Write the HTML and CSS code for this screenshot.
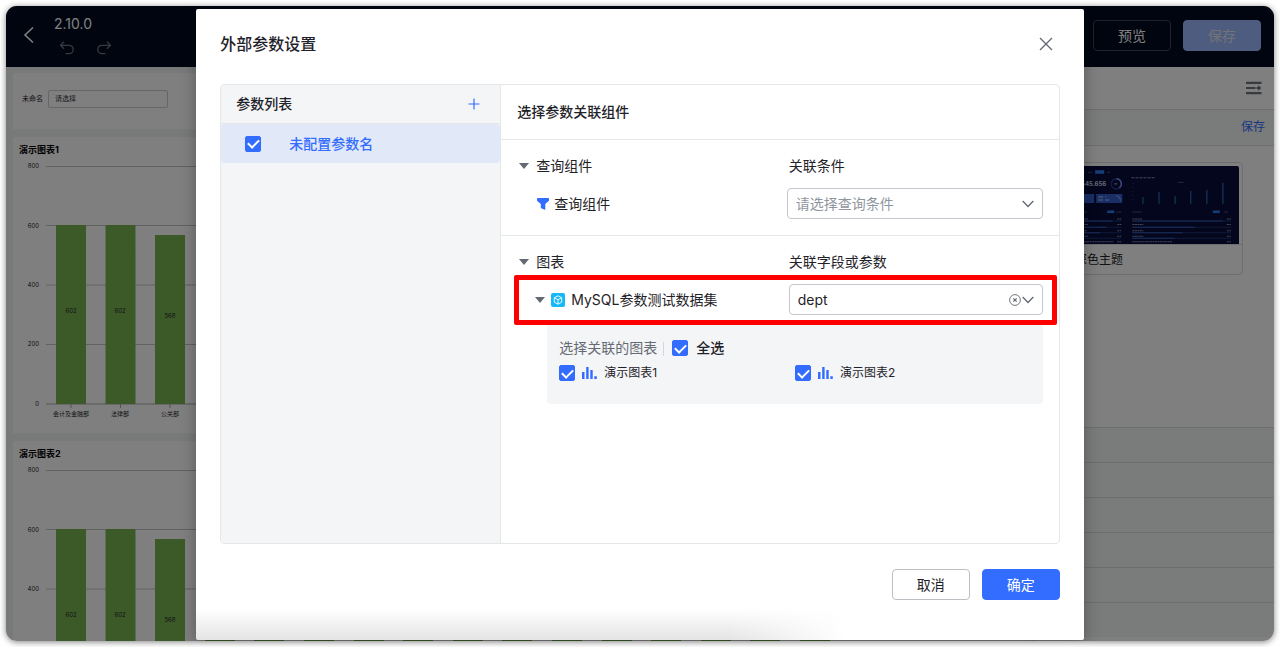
FILE: index.html
```html
<!DOCTYPE html>
<html lang="zh-CN">
<head>
<meta charset="utf-8">
<title>外部参数设置</title>
<link rel="stylesheet" href="styles.css">
</head>
<body>
<div class="window">
  <header class="topbar">
    <button class="icon-btn back" aria-label="返回"><svg width="12" height="18" viewBox="0 0 12 18" fill="none" stroke="currentColor" stroke-width="1.6"><path d="M10 1.500 2 9l8 7.500"/></svg></button>
    <div class="doc">
      <div class="doc-name">2.10.0</div>
      <div class="history">
        <button class="icon-btn" aria-label="撤销"><svg width="16" height="14" viewBox="0 0 16 14" fill="none" stroke="currentColor" stroke-width="1.300"><path d="M5 .8 1.500 4.300 5 7.800M1.500 4.300H10a4.200 4.200 0 0 1 0 8.400H6.500"/></svg></button>
        <button class="icon-btn" aria-label="重做"><svg width="16" height="14" viewBox="0 0 16 14" fill="none" stroke="currentColor" stroke-width="1.300"><path d="m11 .8 3.500 3.500L11 7.800M14.500 4.300H6a4.200 4.200 0 0 0 0 8.400h3.500"/></svg></button>
      </div>
    </div>
    <div class="top-actions">
      <button class="btn preview">预览</button>
      <button class="btn save">保存</button>
    </div>
  </header>

  <div class="workspace">
    <main class="canvas">
      <section class="card filter">
        <label for="unnamed">未命名</label>
        <input id="unnamed" type="text" placeholder="请选择">
      </section>
      <section class="card chart">
        <h2>演示图表1</h2>
        <svg class="plot" width="830" height="269" viewBox="0 0 830 269">
          <path class="grid" d="M27 8.500H830M27 67.500H830M27 127H830M27 186.500H830"/>
          <path class="axis" d="M27 246H830M52 246v4M101.500 246v4M151 246v4"/>
          <path class="bars" d="M37 67h30v179h-30zM86.500 67h30v179h-30zM136 77h30v169h-30zM186 85h30v161h-30zM235 90h30v156h-30zM285 95h30v151h-30z"/>
          <g class="ticks"><text x="20" y="10">800</text><text x="20" y="70">600</text><text x="20" y="129">400</text><text x="20" y="188">200</text><text x="20" y="248">0</text></g>
          <g class="values"><text x="52" y="155">602</text><text x="101" y="155">602</text><text x="151" y="160">568</text><text x="52" y="258">会计及金融部</text><text x="101" y="258">法律部</text><text x="151" y="258">公关部</text></g>
        </svg>
      </section>
      <section class="card chart">
        <h2>演示图表2</h2>
        <svg class="plot" width="830" height="269" viewBox="0 0 830 269">
          <path class="grid" d="M27 8.500H830M27 67.500H830M27 127H830M27 186.500H830"/>
          <path class="axis" d="M27 246H830"/>
          <path class="bars" d="M37 67h30v179h-30zM86.500 67h30v179h-30zM136 77h30v169h-30zM186 85h30v161h-30zM235 90h30v156h-30zM285 95h30v151h-30zM335 100h30v146h-30zM384 105h30v141h-30zM434 110h30v136h-30zM483 115h30v131h-30zM533 120h30v126h-30zM583 125h30v121h-30zM632 130h30v116h-30zM682 135h30v111h-30zM731 140h30v106h-30zM781 145h30v101h-30z"/>
          <g class="ticks"><text x="20" y="10">800</text><text x="20" y="70">600</text><text x="20" y="129">400</text></g>
          <g class="values"><text x="52" y="155">602</text><text x="101" y="155">602</text><text x="151" y="160">568</text></g>
        </svg>
      </section>
    </main>

    <aside class="side">
      <div class="side-head"><button class="icon-btn collapse" aria-label="收起"><svg width="16" height="14" viewBox="0 0 16 14" fill="currentColor"><path d="M0 .8h15.500V3H0zM0 6h9.500v2H0zM0 11h15.500v2.200H0zM10.500 6H12V4.200L15.500 7 12 9.800V8h-1.500z"/></svg></button></div>
      <div class="side-bar"><a href="#">保存</a></div>
      <div class="themes">
        <div class="theme">
          <svg class="thumb" viewBox="0 0 168 78" preserveAspectRatio="xMaxYMid slice">
            <path fill="#060c38" d="M0 0h168v78H0z"/>
            <path fill="#2d7df0" d="M25 4.500h9v3.500h-9zM37 44.500h7v2.500h-7zM142 44.500h7v2.500h-7z"/>
            <path fill="#315cc8" d="M0 28h24v9H0zM26 28h26v9H26z"/>
            <path fill="none" stroke="#b8c8ff" stroke-dasharray="5 2" d="M2 31h14M28 31h8M2 34h12M28 34h11"/>
            <circle cx="46" cy="18" r="5" fill="none" stroke="#26368c" stroke-width="1.500"/>
            <path fill="none" stroke="#7590ee" stroke-width="1.500" d="M46 13a5 5 0 0 1 3 9M46 30a4 4 0 0 1 4 5"/>
            <path stroke="#8890b8" stroke-dasharray="3 1" d="M61 12h23M44 18h4"/>
            <path stroke="#59608c" stroke-width=".8" d="M12 6.500h3M18 6.500h4M37 6.500h3M46 46h5M153 46h4M107 16.500h6M12 46h5M62 46h9"/>
            <path stroke="#30386c" stroke-dasharray="1 3" d="M62.500 17v20"/>
            <path stroke="#24599f" stroke-width="1.500" d="M72.500 31v7M88.500 26v12M104.500 30v8M120 25v13M136 24v14M152 17v21"/>
            <path stroke="#20366f" d="M62 55h98M62 61h98M62 66.500h98M62 72h98M0 55h51M0 61h51M0 66.500h51M0 72h51"/>
            <path stroke="#3058b4" d="M62 55h90M62 61h62M62 66.500h50M62 72h42M0 55h42M0 61h36M0 66.500h30"/>
            <path stroke="#858cb5" stroke-dasharray="2 .5" d="M62 53h10M62 58.500h11M62 64.500h11M62 70h11M62 75.500h40M12 53h6M12 58.500h6M12 64.500h5M12 70h6M12 75.500h31M156 53h4M156 58.500h4M156 64.500h4M156 70h4M156 75.500h4M47 53h4M47 58.500h4M47 64.500h4M47 70h4M47 75.500h4"/>
            <text x="36" y="20" text-anchor="end">1.545.656</text>
          </svg>
          <div class="theme-name">深色主题</div>
        </div>
      </div>
      <div class="groups"><div></div><div></div><div></div><div></div><div></div><div></div></div>
    </aside>
  </div>

  <div class="mask">
    <div class="modal" role="dialog" aria-labelledby="dlg-title">
      <div class="modal-head">
        <h1 id="dlg-title">外部参数设置</h1>
        <button class="icon-btn close" aria-label="关闭"><svg width="14" height="14" viewBox="0 0 14 14" fill="none" stroke="currentColor" stroke-width="1.400"><path d="m1 1 12 12M13 1 1 13"/></svg></button>
      </div>
      <div class="modal-body">
        <div class="params">
          <div class="params-head">
            <h3>参数列表</h3>
            <button class="icon-btn add" aria-label="添加"><svg width="12" height="12" viewBox="0 0 12 12" fill="none" stroke="currentColor" stroke-width="1.200"><path d="M6 .5v11M.5 6h11"/></svg></button>
          </div>
          <div class="param">
            <input type="checkbox" id="p1" checked>
            <label for="p1">未配置参数名</label>
          </div>
        </div>
        <div class="relations">
          <h3 class="rel-title">选择参数关联组件</h3>
          <section class="rel">
            <div class="rel-row">
              <div class="cell"><i class="caret"></i><span>查询组件</span></div>
              <div class="col-label">关联条件</div>
            </div>
            <div class="rel-row fields">
              <div class="cell query">
                <svg width="12" height="12" viewBox="0 0 12 12" fill="#336dff"><path d="M.6 0h10.800q.6 0 .6.600v1.700q0 .4-.3.700L8.300 6v5.400q0 .6-.6.400L4.200 10.300q-.4-.2-.4-.6V6L.3 3Q0 2.700 0 2.300V.6Q0 0 .6 0z"/></svg>
                <label for="cond">查询组件</label>
              </div>
              <div class="select">
                <select id="cond" class="empty"><option>请选择查询条件</option></select>
                <svg class="chev" width="12" height="8" viewBox="0 0 12 8"><path d="m.7 1 5.300 5.500L11.300 1"/></svg>
              </div>
            </div>
          </section>
          <section class="rel">
            <div class="rel-row">
              <div class="cell"><i class="caret"></i><span>图表</span></div>
              <div class="col-label">关联字段或参数</div>
            </div>
            <div class="rel-row fields marked">
              <div class="cell dataset">
                <i class="caret"></i>
                <svg width="14" height="14" viewBox="0 0 14 14"><rect width="14" height="14" rx="2" fill="#14b8f8"/><path d="M7 2.800 10.700 4.700v4.500L7 11.200 3.300 9.200V4.700zM3.300 4.700 7 6.700l3.700-2M7 6.700v4.500" fill="none" stroke="#fff" stroke-width=".9"/></svg>
                <label for="field">MySQL参数测试数据集</label>
              </div>
              <div class="select narrow">
                <select id="field"><option>dept</option></select>
                <button class="icon-btn clear" aria-label="清除"><svg width="12" height="12" viewBox="0 0 12 12" fill="none" stroke="currentColor"><circle cx="6" cy="6" r="5.400" stroke-width=".9"/><path d="m4.300 4.300 3.400 3.400M7.700 4.300 4.300 7.700" stroke-width="1.200"/></svg></button>
                <svg class="chev" width="12" height="8" viewBox="0 0 12 8"><path d="m.7 1 5.300 5.500L11.300 1"/></svg>
              </div>
            </div>
            <div class="picker">
              <div class="pick-head">
                <span class="hint">选择关联的图表</span>
                <input type="checkbox" id="all" checked>
                <label for="all">全选</label>
              </div>
              <div class="pick-list">
                <div class="pick"><input type="checkbox" id="c1" checked><svg width="15" height="12" viewBox="0 0 15 12" fill="#336dff"><path d="M0 5h2.500v7H0zM4.200 0h2.400v12H4.200zM8.300 3h2.400v9H8.300zM12.300 9.300h2.500V12h-2.500z"/></svg><label for="c1">演示图表1</label></div>
                <div class="pick"><input type="checkbox" id="c2" checked><svg width="15" height="12" viewBox="0 0 15 12" fill="#336dff"><path d="M0 5h2.500v7H0zM4.200 0h2.400v12H4.200zM8.300 3h2.400v9H8.300zM12.300 9.300h2.500V12h-2.500z"/></svg><label for="c2">演示图表2</label></div>
              </div>
            </div>
          </section>
        </div>
      </div>
      <div class="modal-foot">
        <button class="btn cancel">取消</button>
        <button class="btn ok">确定</button>
      </div>
    </div>
  </div>
</div>
</body>
</html>
```

FILE: styles.css
```css
* { box-sizing: border-box; }
body {
  margin: 0;
  padding: 6px;
  background: #fff;
  color: #1f2329;
  font: 14px/22px Inter, "Noto Sans CJK SC", sans-serif;
}
h1, h2, h3 { margin: 0; font-weight: 500; }
svg { display: block; flex: none; }
button, input, select { font: inherit; color: inherit; margin: 0; }
.icon-btn { display: flex; padding: 0; border: 0; background: none; cursor: pointer; }

.window {
  position: relative;
  display: flex;
  flex-direction: column;
  height: calc(100vh - 12px);
  border-radius: 11px;
  overflow: hidden;
  background: #f1f5f4;
  box-shadow: 0 1px 6px rgba(0, 0, 0, .5);
}

/* top bar */
.topbar {
  display: flex;
  align-items: flex-start;
  flex: none;
  height: 61px;
  padding: 0 13px 0 17px;
  background: #020a1e;
  color: #fff;
}
.back { margin-top: 20px; }
.doc { margin-left: 19px; padding-top: 7px; }
.doc-name { line-height: 22px; }
.history { display: flex; gap: 21px; margin: 6px 0 0 5px; color: #70747e; }
.top-actions { display: flex; gap: 12px; margin: 14px 0 0 auto; }
.btn {
  width: 78px;
  height: 31px;
  padding: 0;
  border: 1px solid #bbbfc4;
  border-radius: 4px;
  background: #fff;
  cursor: pointer;
}
.preview { background: transparent; border-color: #3f4450; }
.save { background: #9cb9ff; border-color: #9cb9ff; color: #e4e6ee; }

/* workspace */
.workspace { display: flex; flex: 1; min-height: 0; }
.canvas {
  display: flex;
  flex-direction: column;
  gap: 8px;
  flex: 1;
  min-width: 0;
  padding: 6px 7px;
  overflow: hidden;
}
.card { flex: none; background: #fff; overflow: hidden; }
.filter { display: flex; align-items: center; gap: 5px; height: 56px; padding: 0 9px 4px; font-size: 7px; }
.filter input {
  width: 120px;
  height: 18px;
  padding: 0 6px;
  border: 1px solid #ccc;
  border-radius: 2px;
  background: #fff;
}
.filter input::placeholder { color: #333; }
.chart { padding: 7px 6px 6px; }
.chart h2 { margin-bottom: 2px; color: #000; font-size: 9px; line-height: 12px; font-weight: 700; }
.plot { font-size: 6px; fill: #222; }
.grid { stroke: #c4c4c4; fill: none; }
.axis { stroke: #a8a8a8; fill: none; }
.bars { fill: #78b450; }
.ticks { text-anchor: end; }
.values { text-anchor: middle; }

.side { flex: none; width: 240px; background: #fff; border-left: 1px solid #dcdfe2; }
.side-head { display: flex; align-items: center; justify-content: flex-end; height: 43px; padding-right: 12px; border-bottom: 1px solid #dadcdc; }
.collapse { color: #70757e; }
.side-bar { height: 36px; padding: 6px 9px 0; background: #f5f9f8; border-bottom: 1px solid #dadcdc; text-align: right; font-size: 12px; }
.side-bar a { color: #336dff; text-decoration: none; }
.themes { height: 281px; padding: 16px 31px 0; }
.theme { border: 1px solid #dadcdf; border-radius: 4px; }
.thumb { width: calc(100% - 6px); height: 78px; margin: 3px 3px 0; border-radius: 2px 2px 0 0; }
.thumb text { font-size: 6px; font-weight: 700; fill: #c8cce8; }
.theme-name { padding: 4px 8px 3px; border-top: 1px solid #dadcdf; font-size: 12px; }
.groups div { height: 35px; background: #f5f9f8; border-top: 1px solid #dadcdc; }

/* dialog */
.mask {
  position: absolute;
  inset: 0;
  display: flex;
  align-items: flex-start;
  justify-content: center;
  padding-top: 3px;
  background: rgba(0, 0, 0, .5);
}
.modal {
  width: 70%;
  padding: 0 24px 40px;
  border-radius: 2px;
  background: linear-gradient(to right, transparent 60%, #fff 73%), linear-gradient(#fff 95%, #e4e4e4);
  box-shadow: 0 4px 16px rgba(0, 0, 0, .3);
}
.modal-head { display: flex; align-items: center; justify-content: space-between; height: 75px; padding: 0 7px 6px 0; }
.modal-head h1 { font-size: 16px; line-height: 24px; }
.close { color: #646a73; }
.modal-body { display: flex; min-height: 460px; border: 1px solid #e4e6e8; border-radius: 4px; overflow: hidden; background: #fff; }
.params { flex: none; width: 280px; background: #f4f5f7; border-right: 1px solid #e4e6e8; }
.params-head { display: flex; align-items: center; justify-content: space-between; height: 39px; padding: 0 20px 0 15px; border-bottom: 1px solid #e4e6e8; }
.add { color: #336dff; }
.param {
  display: flex;
  align-items: center;
  gap: 28px;
  height: 39px;
  padding-left: 24px;
  border-radius: 4px;
  background: #e1e8f7;
  color: #336dff;
  font-weight: 500;
}
.relations { flex: 1; min-width: 0; }
.rel-title { height: 55px; padding: 0 16px; border-bottom: 1px solid #e4e6e8; line-height: 54px; }
.params-head h3, .rel-title { font-size: 14px; }
.rel { padding: 15px 16px 16px; }
.rel + .rel { border-top: 1px solid #e4e6e8; }
.rel-row { display: grid; grid-template-columns: 1fr 256px; align-items: center; }
.col-label { padding-left: 2px; }
.fields { margin-top: 11px; }
.cell { display: flex; align-items: center; gap: 7px; padding-left: 2px; }
.caret { border: 5px solid transparent; border-top: 6px solid #646a73; border-bottom: 0; }
.query { gap: 5px; padding-left: 20px; }
.dataset { gap: 6px; padding-left: 18px; }
.select { position: relative; }
.narrow { margin-left: 2px; }
.select select {
  display: block;
  appearance: none;
  width: 100%;
  height: 31px;
  padding: 0 40px 0 8px;
  border: 1px solid #c2c6cd;
  border-radius: 4px;
  background: #fff;
}
.select .empty { color: #8f959e; }
.chev { position: absolute; top: 12px; right: 9px; fill: none; stroke: #646a73; stroke-width: 1.300; pointer-events: none; }
.clear { position: absolute; top: 10px; right: 22px; color: #646a73; }
.marked { position: relative; }
.marked::after {
  content: "";
  position: absolute;
  inset: -9px -14px -10px -3px;
  border: 5px solid #f00;
  border-radius: 2px;
  pointer-events: none;
}

.picker { margin: 8px 0 0 30px; padding: 14px 12px 20px; border-radius: 4px; background: #f4f5f7; }
.pick-head { display: flex; align-items: center; gap: 8px; font-weight: 500; }
.hint { color: #646a73; font-weight: 400; }
.hint::after { content: ""; display: inline-block; height: 14px; margin-left: 6px; border-left: 1px solid #d4d7db; vertical-align: middle; }
.pick-list { display: grid; grid-template-columns: 1fr 1fr; margin-top: 3px; font-size: 12px; }
.pick { display: flex; align-items: center; gap: 7px; }

input[type="checkbox"] {
  appearance: none;
  display: grid;
  place-items: center;
  flex: none;
  width: 16px;
  height: 16px;
  border: 1px solid #bbbfc4;
  border-radius: 2px;
}
input[type="checkbox"]:checked { border-color: #336dff; background: #336dff; }
input[type="checkbox"]:checked::after {
  content: "";
  width: 9px;
  height: 5px;
  margin-bottom: 2px;
  border: solid #fff;
  border-width: 0 0 2px 2px;
  transform: rotate(-45deg);
}

.modal-foot { display: flex; justify-content: flex-end; gap: 12px; padding-top: 25px; }
.ok { border-color: #336dff; background: #336dff; color: #fff; }
```
